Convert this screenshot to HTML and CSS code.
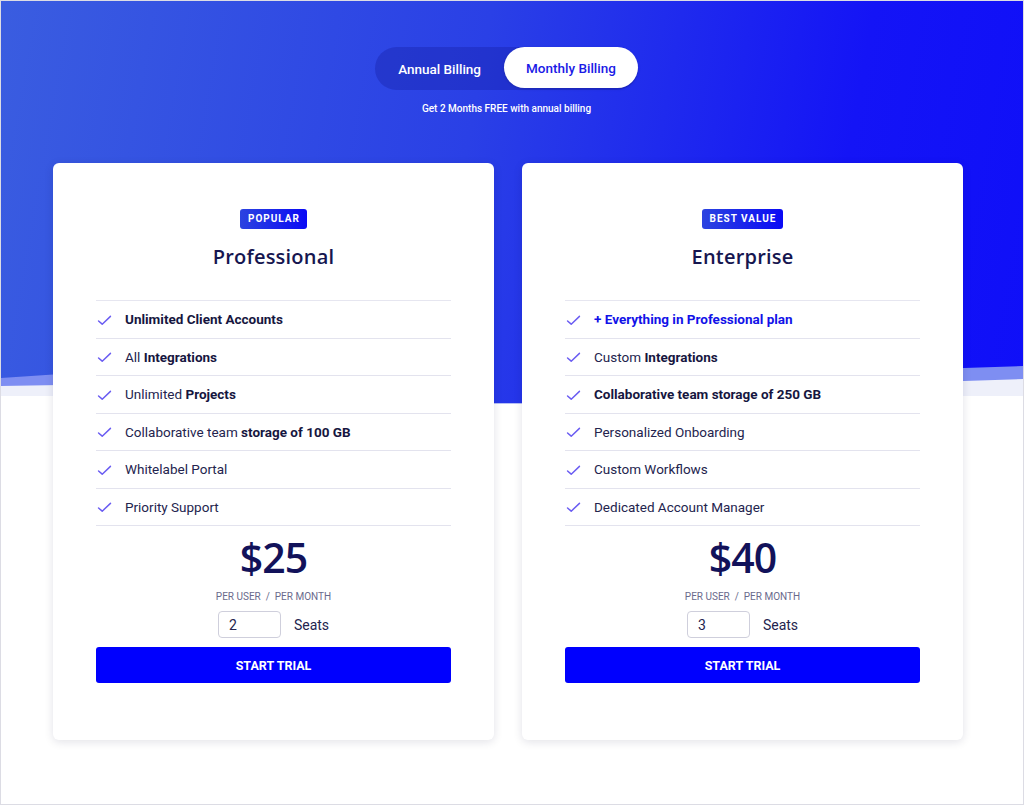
FILE: index.html
```html
<!DOCTYPE html>
<html lang="en">
<head>
  <meta charset="UTF-8" />
  <meta name="viewport" content="width=device-width, initial-scale=1.0"/>
  <title>Pricing</title>
  <link rel="stylesheet" href="styles.css">
</head>
<body>
  <div class="page">
    <div class="hero">
      <div class="billing-toggle">
        <button class="toggle-btn">Annual Billing</button>
        <button class="toggle-btn active">Monthly Billing</button>
      </div>
      <p class="billing-note">Get 2 Months FREE with annual billing</p>

      <!-- wavy lower edge of the blue band -->
      <svg class="wave" viewBox="0 0 1024 60" preserveAspectRatio="none">
        <path d="M0 34 L60 30 C 200 28, 400 58, 494 59 L522 59 C 640 58, 820 26, 965 24 L1024 22 L1024 60 L0 60 Z" fill="#7e8ef2"/>
        <path d="M0 42 L60 41 C 200 40, 400 59, 494 59.5 L522 59.5 C 640 59, 820 38, 965 37 L1024 35 L1024 60 L0 60 Z" fill="#eef0fa"/>
        <path d="M0 52 L60 52 C 200 52, 400 60, 494 60 L522 60 C 640 60, 820 52, 965 52 L1024 52 L1024 60 L0 60 Z" fill="#fff"/>
      </svg>
    </div>

    <div class="plans">
      <div class="plan">
        <span class="badge">Popular</span>
        <h2 class="plan-name">Professional</h2>
        <ul class="features">
          <li><svg class="check" viewBox="0 0 16 12"><path d="M1.5 6.5 L5.5 10 L14.5 1.5"/></svg><span><b>Unlimited Client Accounts</b></span></li>
          <li><svg class="check" viewBox="0 0 16 12"><path d="M1.5 6.5 L5.5 10 L14.5 1.5"/></svg><span>All <b>Integrations</b></span></li>
          <li><svg class="check" viewBox="0 0 16 12"><path d="M1.5 6.5 L5.5 10 L14.5 1.5"/></svg><span>Unlimited <b>Projects</b></span></li>
          <li><svg class="check" viewBox="0 0 16 12"><path d="M1.5 6.5 L5.5 10 L14.5 1.5"/></svg><span>Collaborative team <b>storage of 100 GB</b></span></li>
          <li><svg class="check" viewBox="0 0 16 12"><path d="M1.5 6.5 L5.5 10 L14.5 1.5"/></svg><span>Whitelabel Portal</span></li>
          <li><svg class="check" viewBox="0 0 16 12"><path d="M1.5 6.5 L5.5 10 L14.5 1.5"/></svg><span>Priority Support</span></li>
        </ul>
        <div class="price">$25</div>
        <div class="price-unit">PER USER &nbsp;/&nbsp; PER MONTH</div>
        <div class="seats">
          <input type="text" class="seat-input" value="2">
          <span>Seats</span>
        </div>
        <button class="trial-btn">Start Trial</button>
      </div>

      <div class="plan">
        <span class="badge">Best Value</span>
        <h2 class="plan-name">Enterprise</h2>
        <ul class="features">
          <li><svg class="check" viewBox="0 0 16 12"><path d="M1.5 6.5 L5.5 10 L14.5 1.5"/></svg><span class="highlight">+ Everything in Professional plan</span></li>
          <li><svg class="check" viewBox="0 0 16 12"><path d="M1.5 6.5 L5.5 10 L14.5 1.5"/></svg><span>Custom <b>Integrations</b></span></li>
          <li><svg class="check" viewBox="0 0 16 12"><path d="M1.5 6.5 L5.5 10 L14.5 1.5"/></svg><span><b>Collaborative team storage of 250 GB</b></span></li>
          <li><svg class="check" viewBox="0 0 16 12"><path d="M1.5 6.5 L5.5 10 L14.5 1.5"/></svg><span>Personalized Onboarding</span></li>
          <li><svg class="check" viewBox="0 0 16 12"><path d="M1.5 6.5 L5.5 10 L14.5 1.5"/></svg><span>Custom Workflows</span></li>
          <li><svg class="check" viewBox="0 0 16 12"><path d="M1.5 6.5 L5.5 10 L14.5 1.5"/></svg><span>Dedicated Account Manager</span></li>
        </ul>
        <div class="price">$40</div>
        <div class="price-unit">PER USER &nbsp;/&nbsp; PER MONTH</div>
        <div class="seats">
          <input type="text" class="seat-input" value="3">
          <span>Seats</span>
        </div>
        <button class="trial-btn">Start Trial</button>
      </div>
    </div>
  </div>
</body>
</html>
```

FILE: styles.css
```css
body {
  margin: 0;
  font-family: Roboto, "Liberation Sans", sans-serif;
  background: #fff;
  color: #1c1c50;
}
.page {
  height: 803px;
  border: 1px solid #dcdce4;
  overflow: hidden;
  background: #fff;
}
.hero {
  position: relative;
  height: 403px;
  background: linear-gradient(100deg, #3a5de0 0%, #2a40e6 45%, #1414f6 80%, #0f0ff8 100%);
  padding: 46px 11px 0 0;
  box-sizing: border-box;
  text-align: center;
}
.wave {
  position: absolute;
  left: 0;
  bottom: 0;
  width: 100%;
  height: 60px;
}
.billing-toggle {
  display: inline-flex;
  background: rgba(20, 30, 160, 0.35);
  border-radius: 22px;
  height: 43px;
}
.toggle-btn {
  border: none;
  background: none;
  font-family: Roboto, sans-serif;
  font-size: 13.5px;
  font-weight: 500;
  color: #fff;
  padding: 0 23px;
  border-radius: 22px;
  cursor: pointer;
}
.toggle-btn.active {
  background: #fff;
  color: #1a1ae6;
  padding: 0 22px;
  margin: 0 0 2px 0;
  box-shadow: 0 1px 3px rgba(0,0,0,0.15);
}
.billing-note {
  margin: 13px 0 0;
  font-size: 10px;
  font-weight: 500;
  color: #fff;
}
.plans {
  display: flex;
  gap: 28px;
  justify-content: center;
  margin-top: -241px;
  position: relative;
  padding-right: 8px;
}
.plan {
  width: 441px;
  height: 577px;
  box-sizing: border-box;
  background: #fff;
  border-radius: 6px;
  box-shadow: 0 2px 10px rgba(20, 20, 60, 0.12);
  padding: 44px 43px 0;
  text-align: center;
}
.badge {
  display: inline-block;
  background: linear-gradient(90deg, #2c44e0, #0a0af5);
  color: #fff;
  font-size: 10px;
  font-weight: 700;
  letter-spacing: 1px;
  text-transform: uppercase;
  padding: 4px 7px 4px 8px;
  border-radius: 3px;
  line-height: 12px;
}
.plan-name {
  margin: 14px 0 0;
  font-family: "Open Sans", "Noto Sans", sans-serif;
  font-size: 20px;
  font-weight: 600;
  color: #161650;
  letter-spacing: 0.2px;
}
.features {
  list-style: none;
  margin: 30px 0 0;
  padding: 0;
  border-top: 1px solid #e6e6f0;
  text-align: left;
}
.features li {
  display: flex;
  align-items: center;
  height: 36.5px;
  border-bottom: 1px solid #e3e3ee;
  font-size: 13.5px;
  color: #24244e;
}
.features b {
  font-weight: 700;
  color: #161640;
}
.check {
  width: 15px;
  height: 11px;
  margin: 2px 13px 0 1px;
  fill: none;
  stroke: #6a5cf2;
  stroke-width: 1.6;
  stroke-linecap: round;
  stroke-linejoin: round;
}
.highlight {
  color: #1212e8;
  font-weight: 700;
}
.price {
  margin-top: 5px;
  font-family: "Open Sans", "Noto Sans", sans-serif;
  font-size: 41px;
  font-weight: 600;
  color: #12125a;
  line-height: 52px;
  letter-spacing: -1px;
}
.price-unit {
  font-size: 10px;
  color: #6a6a8c;
  margin-top: 8px;
}
.seats {
  display: flex;
  justify-content: center;
  align-items: center;
  gap: 13px;
  margin-top: 9px;
}
.seat-input {
  width: 63px;
  height: 27px;
  box-sizing: border-box;
  border: 1px solid #cfcfdc;
  border-radius: 4px;
  padding: 0 10px;
  font-family: Roboto, sans-serif;
  font-size: 14px;
  color: #24244e;
}
.seats span {
  font-size: 14px;
  color: #24244e;
}
.trial-btn {
  width: 100%;
  height: 36px;
  margin-top: 9px;
  border: none;
  border-radius: 3px;
  background: #0000fe;
  color: #fff;
  font-family: Roboto, sans-serif;
  font-size: 12.5px;
  font-weight: 700;
  text-transform: uppercase;
  cursor: pointer;
}
```
